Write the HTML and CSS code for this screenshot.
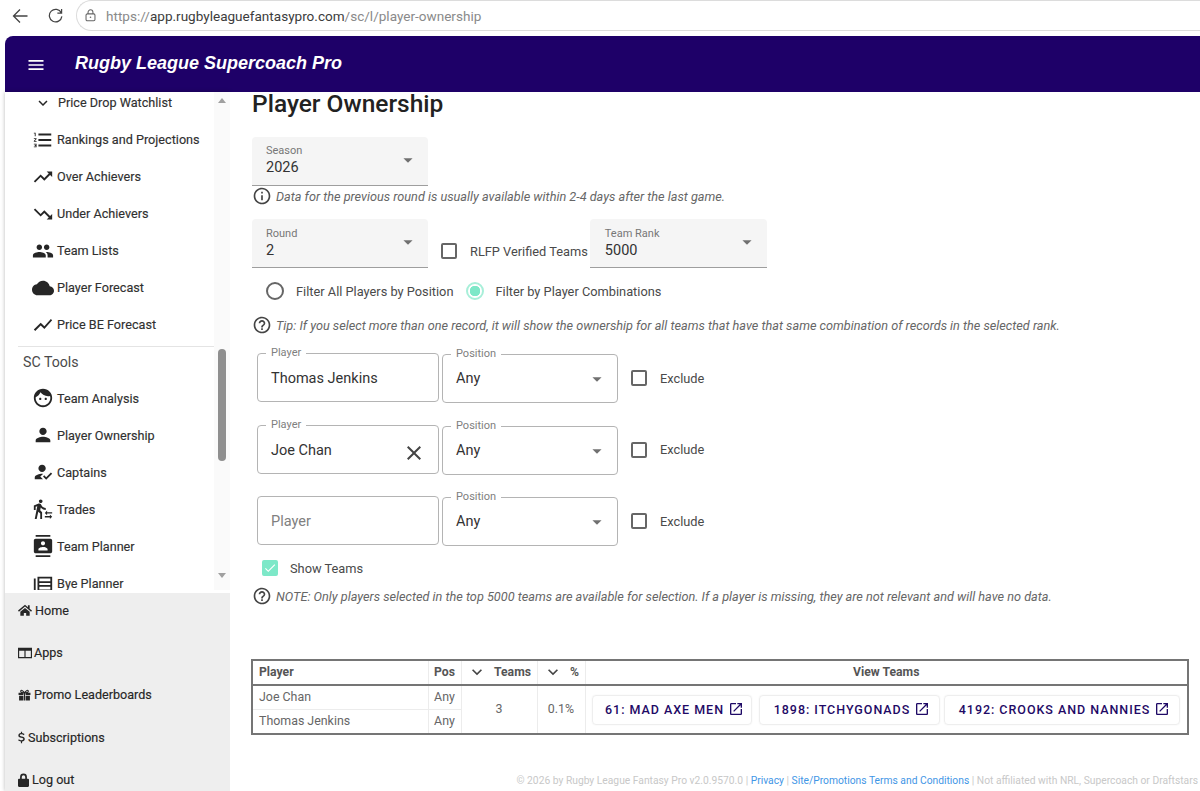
FILE: index.html
```html
<!DOCTYPE html>
<html lang="en">
<head>
<meta charset="utf-8">
<title>Player Ownership</title>
<link rel="stylesheet" href="styles.css">
</head>
<body>
<svg class="defs" aria-hidden="true">
  <symbol id="i-caret" viewBox="0 0 24 24"><path d="M7 10l5 5 5-5z"/></symbol>
  <symbol id="i-open" viewBox="0 0 24 24"><path d="M19 19H5V5h7V3H5c-1.11 0-2 .9-2 2v14c0 1.1.89 2 2 2h14c1.1 0 2-.9 2-2v-7h-2v7zM14 3v2h3.59l-9.83 9.83 1.41 1.41L19 6.41V10h2V3h-7z"/></symbol>
  <symbol id="i-help" viewBox="0 0 24 24"><path d="M11 18h2v-2h-2v2zm1-16C6.48 2 2 6.48 2 12s4.48 10 10 10 10-4.48 10-10S17.52 2 12 2zm0 18c-4.41 0-8-3.59-8-8s3.59-8 8-8 8 3.59 8 8-3.59 8-8 8zm0-14c-2.21 0-4 1.79-4 4h2c0-1.1.9-2 2-2s2 .9 2 2c0 2-3 1.75-3 5h2c0-2.25 3-2.5 3-5 0-2.21-1.79-4-4-4z"/></symbol>
  <symbol id="i-chev" viewBox="0 0 24 24"><path d="M16.59 8.59L12 13.17 7.41 8.59 6 10l6 6 6-6z"/></symbol>
</svg>

<div class="browser">
  <svg class="b-back" viewBox="0 0 16 16"><path d="M15.500 8H1.500M8 1.500L1.500 8 8 14.500"/></svg>
  <svg class="b-reload" viewBox="0 0 16 16"><path d="M14.200 5.200A6.700 6.700 0 1 0 14.800 9M14.500 1v4.500H10"/></svg>
  <div class="b-url">
    <svg class="b-lock" viewBox="0 0 16 16"><rect x="2.500" y="6" width="11" height="8.500" rx="1.600"/><path d="M5 6V4a3 3 0 0 1 6 0v2"/><circle class="b-dot" cx="8" cy="10.200" r="1"/></svg>
    <span class="b-dim">https://</span><span class="b-host">app.rugbyleaguefantasypro.com</span><span class="b-dim">/sc/l/player-ownership</span>
  </div>
</div>

<div class="app">
  <header class="topbar">
    <svg class="menu-icon" viewBox="0 0 24 24"><path d="M3 18h18v-2H3v2zm0-5h18v-2H3v2zm0-7v2h18V6H3z"/></svg>
    <div class="brand">Rugby League Supercoach Pro</div>
  </header>
  <div class="body-row">
    <aside class="sidebar">
      <nav class="nav">
        <div class="nav-scroll">
          <a class="nav-item nav-first"><svg class="ni" viewBox="0 0 24 24"><use href="#i-chev"/></svg>Price Drop Watchlist</a>
          <a class="nav-item"><svg class="ni" viewBox="0 0 24 24"><path d="M2 17h2v.5H3v1h1v.5H2v1h3v-4H2zm1-9h1V4H2v1h1v3zm-1 3h1.8L2 13.1v.9h3v-1H3.2L5 10.9V10H2v1zm5-6v2h14V5H7zm0 14h14v-2H7v2zm0-6h14v-2H7v2z"/></svg>Rankings and Projections</a>
          <a class="nav-item"><svg class="ni" viewBox="0 0 24 24"><path d="M16 6l2.29 2.29-4.88 4.88-4-4L2 16.59 3.41 18l6-6 4 4 6.3-6.29L22 12V6z"/></svg>Over Achievers</a>
          <a class="nav-item"><svg class="ni" viewBox="0 0 24 24"><path d="M16 18l2.29-2.29-4.88-4.88-4 4L2 7.41 3.41 6l6 6 4-4 6.3 6.29L22 12v6z"/></svg>Under Achievers</a>
          <a class="nav-item"><svg class="ni" viewBox="0 0 24 24"><path d="M16 11c1.66 0 2.99-1.34 2.99-3S17.66 5 16 5c-1.66 0-3 1.34-3 3s1.34 3 3 3zm-8 0c1.66 0 2.99-1.34 2.99-3S9.66 5 8 5C6.34 5 5 6.34 5 8s1.34 3 3 3zm0 2c-2.33 0-7 1.17-7 3.5V19h14v-2.5c0-2.33-4.67-3.5-7-3.5zm8 0c-.29 0-.62.02-.97.05 1.16.84 1.97 1.97 1.97 3.45V19h6v-2.5c0-2.33-4.67-3.5-7-3.5z"/></svg>Team Lists</a>
          <a class="nav-item"><svg class="ni" viewBox="0 0 24 24"><path d="M19.35 10.04C18.67 6.59 15.64 4 12 4 9.11 4 6.6 5.64 5.35 8.04 2.34 8.36 0 10.91 0 14c0 3.31 2.69 6 6 6h13c2.76 0 5-2.24 5-5 0-2.64-2.05-4.78-4.65-4.96z"/></svg>Player Forecast</a>
          <a class="nav-item"><svg class="ni" viewBox="0 0 24 24"><path d="M3.5 18.49l6-6.01 4 4L22 6.92l-1.41-1.41-7.09 7.97-4-4L2 16.99z"/></svg>Price BE Forecast</a>
          <div class="nav-divider"></div>
          <div class="nav-head">SC Tools</div>
          <a class="nav-item"><svg class="ni" viewBox="0 0 24 24"><path d="M9 11.75c-.69 0-1.25.56-1.25 1.25s.56 1.25 1.25 1.25 1.25-.56 1.25-1.25-.56-1.25-1.25-1.25zm6 0c-.69 0-1.25.56-1.25 1.25s.56 1.25 1.25 1.25 1.25-.56 1.25-1.25-.56-1.25-1.25-1.25zM12 2C6.48 2 2 6.48 2 12s4.48 10 10 10 10-4.48 10-10S17.52 2 12 2zm0 18c-4.41 0-8-3.59-8-8 0-.29.02-.58.05-.86 2.36-1.05 4.23-2.98 5.21-5.37C11.07 8.33 14.05 10 17.42 10c.78 0 1.53-.09 2.25-.26.21.71.33 1.47.33 2.26 0 4.41-3.59 8-8 8z"/></svg>Team Analysis</a>
          <a class="nav-item"><svg class="ni" viewBox="0 0 24 24"><path d="M12 12c2.21 0 4-1.79 4-4s-1.79-4-4-4-4 1.79-4 4 1.79 4 4 4zm0 2c-2.67 0-8 1.34-8 4v2h16v-2c0-2.66-5.33-4-8-4z"/></svg>Player Ownership</a>
          <a class="nav-item"><svg class="ni" viewBox="0 0 24 24"><path d="M9 17l3-2.94c-.39-.04-.68-.06-1-.06-2.67 0-8 1.34-8 4v2h9l-3-3zm2-5c2.21 0 4-1.79 4-4s-1.79-4-4-4-4 1.79-4 4 1.79 4 4 4M15.47 20.5L12 17l1.4-1.41 2.07 2.08 5.13-5.17 1.4 1.41z"/></svg>Captains</a>
          <a class="nav-item"><svg class="ni" viewBox="0 0 24 24"><path d="M16.49 15.5v-1.75L14 16.25l2.49 2.5V17H22v-1.5zm3.02 4.25H14v1.5h5.51V23L22 20.5 19.51 18zM9.5 5.5c1.1 0 2-.9 2-2s-.9-2-2-2-2 .9-2 2 .9 2 2 2zM5.75 8.9L3 23h2.1l1.75-8L9 17v6h2v-7.55L8.95 13.4l.6-3C10.85 12 12.8 13 15 13v-2c-1.85 0-3.45-1-4.35-2.45l-.95-1.6C9.35 6.35 8.7 6 8 6c-.25 0-.5.05-.75.1L2 8.3V13h2V9.65l1.75-.75"/></svg>Trades</a>
          <a class="nav-item"><svg class="ni" viewBox="0 0 24 24"><path d="M20 0H4v2h16V0zM4 24h16v-2H4v2zM20 4H4c-1.1 0-2 .9-2 2v12c0 1.1.9 2 2 2h16c1.1 0 2-.9 2-2V6c0-1.1-.9-2-2-2zm-8 2.75c1.24 0 2.25 1.01 2.25 2.25s-1.01 2.25-2.25 2.25S9.75 10.24 9.75 9 10.76 6.75 12 6.75zM17 17H7v-1.5c0-1.67 3.33-2.5 5-2.5s5 .83 5 2.5V17z"/></svg>Team Planner</a>
          <a class="nav-item"><svg class="ni" viewBox="0 0 24 24"><path d="M2 6h2v14H2zM6 4h16v16H6zm2 2v3h12V6zm0 5v2h12v-2zm0 4v3h12v-3z"/></svg>Bye Planner</a>
        </div>
        <div class="scrollbar">
          <span class="sb-up"></span>
          <span class="sb-thumb"></span>
          <span class="sb-down"></span>
        </div>
      </nav>
      <div class="side-bottom">
        <a class="bot-item"><svg class="bi bi-home" viewBox="0 0 24 20"><path d="M12 1L0 11l1.6 1.9L12 4.2l10.4 8.7L24 11l-4-3.3V2h-3v3.2zM4 13.2V20h6v-5h4v5h6v-6.8L12 6.5z"/></svg>Home</a>
        <a class="bot-item"><svg class="bi bi-apps" viewBox="0 0 24 20"><path d="M0 1h24v18H0zm2 5v11h9V6zm11 0v11h9V6z"/></svg>Apps</a>
        <a class="bot-item"><svg class="bi bi-gift" viewBox="0 0 24 20"><path d="M1 6h9v4H1zm13 0h9v4h-9zM2 11.500h8V20H2zm12 0h8V20h-8zM11 6h2V20h-2z"/><path class="bi-bow" d="M12 6C9 1 5 0 5 3s4 3 7 3c3 0 7 0 7-3s-4-2-7 3z"/></svg>Promo Leaderboards</a>
        <a class="bot-item"><svg class="bi bi-dollar" viewBox="0 0 12 20"><path d="M5 0h2v2.200c1.900.2 3.400 1 4.300 2L9.800 6C9 5.200 7.600 4.600 6 4.600 4.300 4.600 3.200 5.300 3.200 6.300c0 1 .9 1.500 3.200 2 3.300.7 5.200 1.700 5.200 4.200 0 2.300-1.800 3.900-4.600 4.300V20H5v-3.200c-2-.2-3.800-1-4.900-2.200L1.700 12.800c1 .9 2.600 1.700 4.400 1.700 1.800 0 2.900-.7 2.900-1.800 0-1-.9-1.600-3.400-2.100C2.300 9.900.6 8.800.6 6.500.6 4.300 2.300 2.700 5 2.300z"/></svg>Subscriptions</a>
        <a class="bot-item"><svg class="bi bi-lock" viewBox="0 0 16 20"><path d="M3 8V5.500a5 5 0 0 1 10 0V8h1.500A1.500 1.500 0 0 1 16 9.500v9a1.500 1.500 0 0 1-1.500 1.500h-13A1.500 1.500 0 0 1 0 18.500v-9A1.500 1.500 0 0 1 1.500 8zm2.500 0h5V5.500a2.500 2.500 0 0 0-5 0z"/></svg>Log out</a>
      </div>
    </aside>

    <main class="content">
      <h1 class="title">Player Ownership</h1>

      <div class="filled-select season">
        <span class="fs-label">Season</span>
        <span class="fs-value">2026</span>
        <svg class="caret" viewBox="0 0 24 24"><use href="#i-caret"/></svg>
      </div>
      <p class="note note-info">
        <svg class="note-icon" viewBox="0 0 24 24"><path d="M11 7h2v2h-2zm0 4h2v6h-2zm1-9C6.480 2 2 6.480 2 12s4.480 10 10 10 10-4.480 10-10S17.520 2 12 2zm0 18c-4.410 0-8-3.590-8-8s3.590-8 8-8 8 3.590 8 8-3.590 8-8 8z"/></svg>
        Data for the previous round is usually available within 2-4 days after the last game.
      </p>

      <div class="round-row">
        <div class="filled-select">
          <span class="fs-label">Round</span>
          <span class="fs-value">2</span>
          <svg class="caret" viewBox="0 0 24 24"><use href="#i-caret"/></svg>
        </div>
        <label class="check-label verified"><span class="box"></span>RLFP Verified Teams</label>
        <div class="filled-select rank">
          <span class="fs-label">Team Rank</span>
          <span class="fs-value">5000</span>
          <svg class="caret" viewBox="0 0 24 24"><use href="#i-caret"/></svg>
        </div>
      </div>

      <div class="radio-row">
        <label class="radio-label"><span class="radio"></span>Filter All Players by Position</label>
        <label class="radio-label"><span class="radio radio-on"></span>Filter by Player Combinations</label>
      </div>

      <p class="note note-tip">
        <svg class="note-icon" viewBox="0 0 24 24"><use href="#i-help"/></svg>
        Tip: If you select more than one record, it will show the ownership for all teams that have that same combination of records in the selected rank.
      </p>

      <div class="player-row">
        <div class="outlined player-box"><span class="o-label">Player</span><span class="o-value">Thomas Jenkins</span></div>
        <div class="outlined pos-box"><span class="o-label">Position</span><span class="o-value">Any</span><svg class="caret" viewBox="0 0 24 24"><use href="#i-caret"/></svg></div>
        <label class="check-label exclude"><span class="box"></span>Exclude</label>
      </div>
      <div class="player-row">
        <div class="outlined player-box"><span class="o-label">Player</span><span class="o-value">Joe Chan</span>
          <svg class="clear" viewBox="0 0 24 24"><path d="M19 6.410L17.590 5 12 10.590 6.410 5 5 6.410 10.590 12 5 17.590 6.410 19 12 13.410 17.590 19 19 17.590 13.410 12z"/></svg></div>
        <div class="outlined pos-box"><span class="o-label">Position</span><span class="o-value">Any</span><svg class="caret" viewBox="0 0 24 24"><use href="#i-caret"/></svg></div>
        <label class="check-label exclude"><span class="box"></span>Exclude</label>
      </div>
      <div class="player-row">
        <div class="outlined player-box"><span class="o-placeholder">Player</span></div>
        <div class="outlined pos-box"><span class="o-label">Position</span><span class="o-value">Any</span><svg class="caret" viewBox="0 0 24 24"><use href="#i-caret"/></svg></div>
        <label class="check-label exclude"><span class="box"></span>Exclude</label>
      </div>

      <label class="check-label show-teams">
        <span class="box box-on"><svg viewBox="0 0 24 24"><path d="M9 16.170L4.830 12l-1.420 1.410L9 19 21 7l-1.410-1.410z"/></svg></span>Show Teams
      </label>

      <p class="note note-warn">
        <svg class="note-icon" viewBox="0 0 24 24"><use href="#i-help"/></svg>
        NOTE: Only players selected in the top 5000 teams are available for selection. If a player is missing, they are not relevant and will have no data.
      </p>

      <table class="results">
        <colgroup><col class="c-player"><col class="c-pos"><col class="c-teams"><col class="c-pct"><col class="c-view"></colgroup>
        <thead>
          <tr>
            <th class="left">Player</th>
            <th>Pos</th>
            <th><span class="sort"><svg viewBox="0 0 24 24"><use href="#i-chev"/></svg>Teams</span></th>
            <th><span class="sort"><svg viewBox="0 0 24 24"><use href="#i-chev"/></svg>%</span></th>
            <th>View Teams</th>
          </tr>
        </thead>
        <tbody>
          <tr>
            <td class="left">Joe Chan</td>
            <td>Any</td>
            <td rowspan="2">3</td>
            <td rowspan="2">0.1%</td>
            <td rowspan="2" class="team-cell">
              <div class="team-list">
                <a class="team-btn t1">61: Mad Axe Men<svg viewBox="0 0 24 24"><use href="#i-open"/></svg></a>
                <a class="team-btn t2">1898: ItchyGonads<svg viewBox="0 0 24 24"><use href="#i-open"/></svg></a>
                <a class="team-btn t3">4192: Crooks and Nannies<svg viewBox="0 0 24 24"><use href="#i-open"/></svg></a>
              </div>
            </td>
          </tr>
          <tr>
            <td class="left">Thomas Jenkins</td>
            <td>Any</td>
          </tr>
        </tbody>
      </table>

      <footer class="foot">© 2026 by Rugby League Fantasy Pro v2.0.9570.0 | <a>Privacy</a> | <a>Site/Promotions Terms and Conditions</a> | Not affiliated with NRL, Supercoach or Draftstars</footer>
    </main>
  </div>
</div>
</body>
</html>
```
FILE: styles.css
```css
* { box-sizing: border-box; }
html, body { margin: 0; height: 791px; overflow: hidden; background: #fff; }
body { font-family: Roboto, "Liberation Sans", sans-serif; color: #333; position: relative; }
p { margin: 0; }
.defs { position: absolute; width: 0; height: 0; }

/* browser */
.browser { height: 36px; display: flex; align-items: center; padding: 0 0 5px 12px; background: #fff; }
.b-back { width: 16px; height: 16px; fill: none; stroke: #444; stroke-width: 1.300; flex: none; }
.b-reload { width: 15px; height: 15px; margin-left: 20px; fill: none; stroke: #444; stroke-width: 1.300; flex: none; }
.b-url { flex: 1; margin-left: 13px; height: 31px; border: 1px solid #dcdcdc; border-right: 0; border-radius: 16px 0 0 16px; display: flex; align-items: center; padding-left: 7px; font-size: 13.550px; white-space: nowrap; }
.b-lock { width: 13px; height: 13px; margin-right: 9px; fill: none; stroke: #666; stroke-width: 1.300; flex: none; }
.b-dot { fill: #666; stroke: none; }
.b-dim { color: #8a8a8a; }
.b-host { color: #3c3c3c; }

/* app frame */
.app { margin-left: 5px; height: 755px; display: flex; flex-direction: column; }
.topbar { height: 56px; background: #1e0068; border-radius: 8px 0 0 0; display: flex; align-items: center; color: #fff; flex: none; }
.menu-icon { width: 20px; height: 20px; fill: #fff; margin-left: 21px; margin-top: 2px; flex: none; }
.brand { margin-left: 29px; margin-top: -2px; font: italic 700 18px "Liberation Sans", Arial, sans-serif; white-space: nowrap; }
.body-row { flex: 1; display: flex; min-height: 0; }

/* sidebar */
.sidebar { width: 225px; flex: none; display: flex; flex-direction: column; box-shadow: 0 0 4px rgba(0,0,0,.28); position: relative; background: #fff; }
.nav { height: 498px; flex: none; position: relative; overflow: hidden; margin-bottom: 3px; }
.nav-scroll { padding: 0 11px 0 0; }
.nav-item { display: flex; align-items: center; height: 37px; padding-left: 27px; font-size: 12.650px; font-weight: 400; color: #303030; white-space: nowrap; -webkit-text-stroke: .15px #303030; }
.nav-item:last-child { padding-top: 1px; }
.nav-first { height: 21px; margin-bottom: 8px; }
.nav-first .ni { width: 18px; height: 18px; margin: 0 6px 0 2px; }
.ni { width: 22px; height: 22px; margin-right: 3px; fill: #262626; flex: none; }
.nav-divider { height: 1px; background: #e4e4e4; margin: 3px 0 0 13px; width: 196px; }
.nav-head { height: 30px; display: flex; align-items: center; padding-left: 18px; font-size: 14.200px; color: #4a4a4a; margin-bottom: 2.500px; }
.scrollbar { position: absolute; right: 0; top: 0; bottom: 0; width: 16px; background: #fafafa; display: flex; flex-direction: column; align-items: center; }
.sb-up { border: 4px solid transparent; border-bottom: 5px solid #a0a0a0; border-top: 0; margin-top: 6px; }
.sb-thumb { width: 8px; height: 112px; border-radius: 4px; background: #8f8f8f; margin-top: 246px; }
.sb-down { border: 4px solid transparent; border-top: 5px solid #a0a0a0; border-bottom: 0; margin-top: 112px; }
.side-bottom { flex: 1; background: #eeeeee; overflow: hidden; }
.bot-item { display: flex; align-items: center; height: 42.400px; padding-left: 13px; font-size: 12.600px; color: #262626; white-space: nowrap; -webkit-text-stroke: .15px #262626; }
.bot-item:first-child { margin-top: -4px; }
.bi { fill: #262626; height: 13px; margin-right: 2px; flex: none; }
.bi-home { width: 14px; height: 12px; margin-right: 3px; }
.bi-apps { width: 14px; height: 12px; margin-right: 2px; }
.bi-gift { width: 13px; height: 12px; margin-right: 3px; }
.bi-bow { fill: none; stroke: #262626; stroke-width: 2; }
.bi-dollar { width: 7px; height: 13px; margin-right: 3px; }
.bi-lock { width: 11px; height: 14px; margin-right: 3px; }

/* content */
.content { flex: 1; min-width: 0; padding: 0 11px 0 22px; position: relative; background: #fff; }
.title { margin: -2px 0 0; height: 27px; line-height: 27px; font-size: 24.500px; font-weight: 500; color: #222; white-space: nowrap; }
.filled-select { position: relative; width: 176px; height: 49px; flex: none; background: #f5f5f5; border-bottom: 1px solid #9e9e9e; border-radius: 4px 4px 0 0; }
.season { margin-top: 20px; }
.fs-label { position: absolute; left: 14px; top: 7px; font-size: 11px; color: #777; }
.fs-value { position: absolute; left: 14px; top: 22px; font-size: 14.500px; color: #333; }
.round-row .fs-label { top: 8px; }
.round-row .fs-value { top: 23px; }
.rank { width: 177px; }
.rank .fs-label, .rank .fs-value { left: 15px; }
.caret { position: absolute; right: 9px; top: 12px; width: 22px; height: 22px; fill: #707070; }
.note { display: flex; align-items: center; font-size: 12.700px; font-style: italic; color: #666; white-space: nowrap; }
.note-icon { width: 20px; height: 20px; fill: #444; margin-right: 4px; flex: none; }
.note-info { height: 24px; margin-top: -2px; }
.round-row { display: flex; align-items: flex-start; margin-top: 11px; }
.check-label { display: flex; align-items: center; font-size: 12.800px; color: #4a4a4a; white-space: nowrap; }
.box { width: 16px; height: 16px; border: 2px solid #666; border-radius: 2px; flex: none; background: #fff; }
.verified { margin: 24px 2px 0 13px; height: 16px; }
.verified .box { margin-right: 13px; }
.radio-row { display: flex; height: 22px; margin-top: 12px; padding-left: 14px; align-items: center; }
.radio-label { display: flex; align-items: center; font-size: 12.800px; color: #4a4a4a; white-space: nowrap; margin-right: 13px; }
.radio { width: 18px; height: 18px; border-radius: 50%; border: 2px solid #666; margin-right: 12px; flex: none; }
.radio-on { border-color: #a8efd9; background: radial-gradient(circle, #7de8c8 0 5px, #fff 5.500px); margin-right: 11px; }
.note-tip { height: 24px; margin-top: 11px; }
.player-row { display: flex; align-items: flex-start; height: 71.500px; padding-left: 5px; }
.note-tip + .player-row { margin-top: 16px; }
.outlined { position: relative; height: 49px; border: 1px solid #b4b4b4; border-radius: 4px; flex: none; }
.player-box { width: 181.500px; }
.pos-box { width: 176px; margin: 1px 0 0 3.500px; }
.o-label { position: absolute; left: 8px; top: -7px; padding: 0 5px; background: #fff; font-size: 11px; line-height: 12px; color: #808080; }
.o-value { position: absolute; left: 13px; top: 16px; font-size: 14.500px; color: #333; }
.pos-box .o-value { top: 15px; }
.o-placeholder { position: absolute; left: 13px; top: 16px; font-size: 14.500px; color: #808080; }
.clear { position: absolute; right: 12px; top: 15px; width: 24px; height: 24px; fill: #444; }
.pos-box .caret { top: 13px; right: 9px; }
.exclude { margin: 17px 0 0 13px; height: 16px; }
.exclude .box { margin-right: 13px; }
.show-teams { height: 16px; margin: -7.500px 0 0 10px; }
.show-teams .box { margin-right: 12px; }
.box-on { background: #7de8c8; border-color: #7de8c8; display: flex; align-items: center; justify-content: center; }
.box-on svg { width: 14px; height: 14px; fill: #fff; flex: none; }
.note-warn { height: 24px; margin-top: 8px; }

/* table */
.results { width: 938px; table-layout: fixed; border-collapse: collapse; border: 2px solid #757575; margin: 51px 0 0 -1px; font-size: 12.400px; color: #666; }
.c-player { width: 176px; } .c-pos { width: 33px; } .c-teams { width: 76px; } .c-pct { width: 48px; }
.results th, .results td { text-align: center; padding: 0 0 2px; border: 1px solid #ececec; overflow: hidden; }
.results th { height: 25px; font-size: 12.200px; font-weight: 700; color: #555; border-bottom: 2px solid #757575; }
.results td { height: 24.500px; }
.results .left { text-align: left; padding-left: 6px; }
.sort { display: flex; align-items: center; justify-content: center; gap: 7px; }
.sort svg { width: 20px; height: 20px; fill: #444; flex: none; }
.results .team-cell { overflow: visible; padding: 0; }
.team-list { display: flex; padding-left: 6px; }
.team-btn { display: flex; align-items: center; justify-content: center; height: 30px; padding: 0 0 1px 6px; border: 1px solid #eeeeee; border-radius: 4px; box-shadow: 0 0 2px rgba(0,0,0,.06); text-transform: uppercase; font-size: 12.500px; font-weight: 500; letter-spacing: .97px; color: #1f0a66; white-space: nowrap; flex: none; }
.team-btn svg { width: 16px; height: 16px; fill: #1f0a66; margin-left: 4px; flex: none; }
.t1 { width: 160px; } .t2 { width: 181px; margin-left: 7px; } .t3 { width: 236px; margin-left: 4px; }

/* footer */
.foot { position: absolute; right: 2px; top: 682px; font-size: 10.290px; color: #c8c8c8; white-space: nowrap; }
.foot a { color: #3f96e6; }
```
